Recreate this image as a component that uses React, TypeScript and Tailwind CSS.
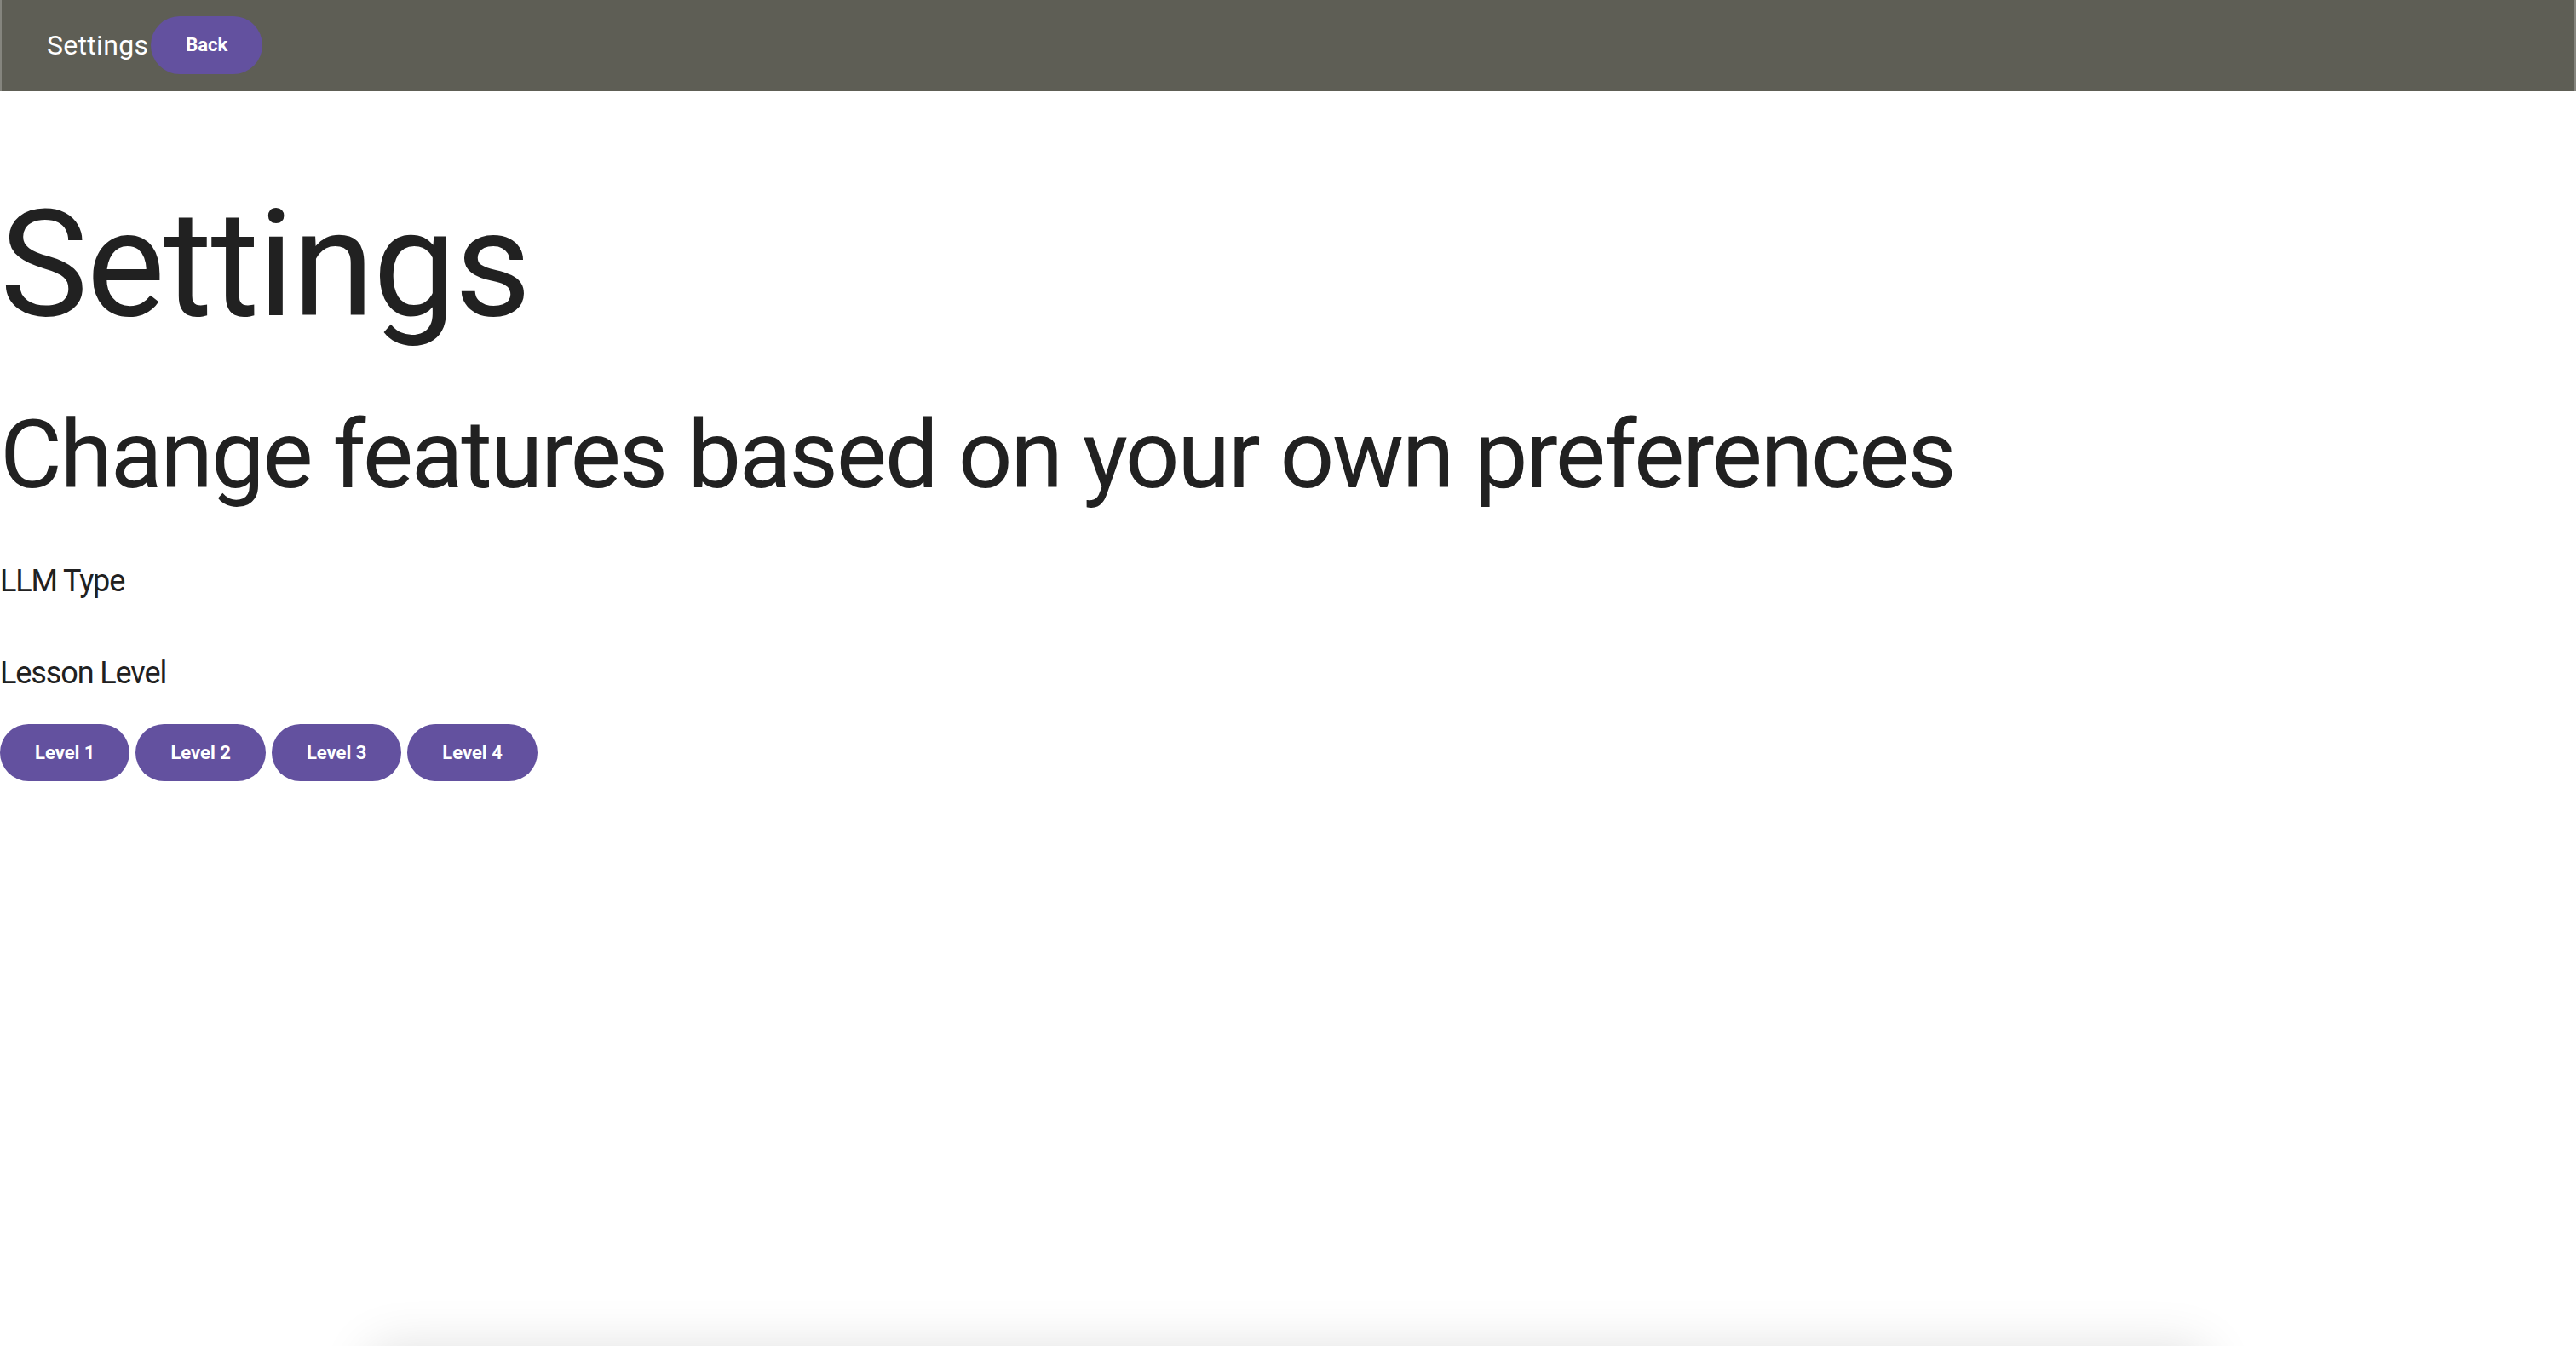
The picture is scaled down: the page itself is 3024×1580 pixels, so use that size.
import React from 'react';

const levels = ['Level 1', 'Level 2', 'Level 3', 'Level 4'];

function PillButton({ label }: { label: string }) {
  return (
    <button className="h-[67px] px-[41px] rounded-full bg-[#63519f] text-white text-[22px] font-bold leading-none whitespace-nowrap">
      {label}
    </button>
  );
}

export default function App() {
  return (
    <div className="min-h-screen bg-white font-['Roboto',sans-serif] text-[#212121] overflow-hidden">
      {/* Top bar */}
      <header className="h-[107px] bg-[#5e5e55] border-x-2 border-[#85857e] flex items-center pl-[53px] pb-[2px]">
        <span className="text-white text-[32px] leading-none tracking-[0.3px]">Settings</span>
        <button className="ml-[3px] h-[68px] px-[41px] rounded-full bg-[#63519f] text-white text-[22px] font-bold leading-none">
          Back
        </button>
      </header>

      <main>
        <h1 className="mt-[117px] text-[174px] leading-none font-normal tracking-[-1.7px]">Settings</h1>
        <h2 className="mt-[80px] text-[112px] leading-none font-normal tracking-[-2.4px]">
          Change features based on your own preferences
        </h2>

        <p className="mt-[74px] text-[36px] leading-none tracking-[-1.1px]">LLM Type</p>

        <p className="mt-[72px] text-[36px] leading-none tracking-[-1.1px]">Lesson Level</p>

        <div className="mt-[42px] flex gap-[7px]">
          {levels.map((l) => (
            <PillButton key={l} label={l} />
          ))}
        </div>
      </main>

      {/* Sheet sitting just below the viewport */}
      <div className="fixed top-full left-[432px] w-[2160px] h-[200px] bg-white rounded-t-[24px] shadow-[0_0_60px_rgba(0,0,0,0.12)]" />
    </div>
  );
}
